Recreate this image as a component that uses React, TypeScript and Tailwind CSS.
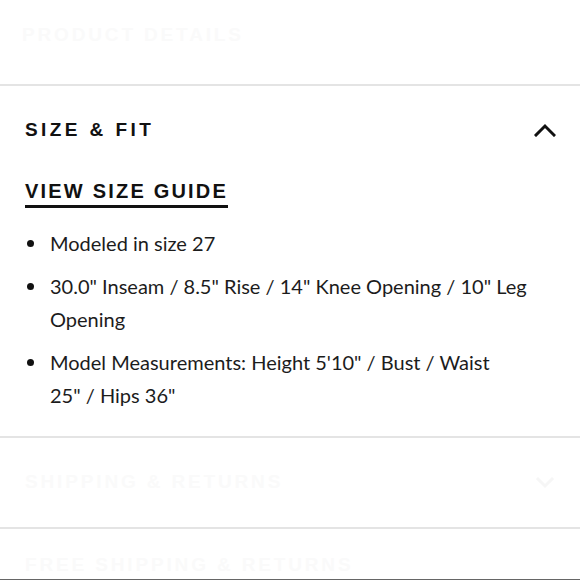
import React from 'react';

const body = { fontFamily: 'Lato, "Open Sans", sans-serif' };
const head = { fontFamily: '"Liberation Sans", Arial, sans-serif' };

function Chevron({ up, faint }: { up?: boolean; faint?: boolean }) {
  return (
    <svg width="22" height="14" viewBox="0 0 22 14" fill="none">
      <polyline
        points={up ? '2,12 11,3 20,12' : '4,3 11,10 18,3'}
        stroke={faint ? '#f6f6f6' : '#111'}
        strokeWidth="3"
        strokeLinecap="square"
      />
    </svg>
  );
}

function FaintRow({ title }: { title: string }) {
  return (
    <div className="flex h-[91px] items-center justify-between border-b-2 border-[#e4e4e4] pl-[25px] pr-[24px]">
      <span className="text-[19px] font-bold tracking-[0.15em] text-[#fafafa]" style={head}>
        {title}
      </span>
      <Chevron faint />
    </div>
  );
}

const items = [
  'Modeled in size 27',
  '30.0" Inseam / 8.5" Rise / 14" Knee Opening / 10" Leg Opening',
  'Model Measurements: Height 5\'10" / Bust / Waist 25"\u00a0/\u00a0Hips\u00a036"',
];

export default function App() {
  return (
    <div className="h-[580px] w-[580px] overflow-hidden bg-white">
      <div className="flex h-[86px] items-center border-b-2 border-[#e4e4e4] pb-[14px] pl-[22px]">
        <span className="text-[19px] font-bold tracking-[0.15em] text-[#fafafa]" style={head}>
          PRODUCT DETAILS
        </span>
      </div>

      <div className="border-b-2 border-[#e4e4e4] pb-[24px]">
        <div className="flex h-[88px] items-center justify-between pl-[25px] pr-[24px]">
          <span className="text-[19px] font-bold tracking-[0.18em] text-[#111]" style={head}>
            SIZE &amp; FIT
          </span>
          <Chevron up />
        </div>
        <div className="pl-[25px] pt-[5px]">
          <span
            className="inline-block border-b-[3px] border-[#111] pb-[2px] text-[20px] font-bold leading-6 tracking-[0.11em] text-[#111]"
            style={head}
          >
            VIEW SIZE GUIDE
          </span>
        </div>
        <ul className="mt-[19px] flex flex-col gap-[10px] pr-[20px] text-[20px] leading-[33px] text-[#1c1c1c]" style={body}>
          {items.map((t) => (
            <li key={t} className="flex">
              <span className="flex h-[33px] w-[50px] shrink-0 items-center pl-[27px]">
                <span className="h-[7px] w-[7px] rounded-full bg-[#111]" />
              </span>
              <span>{t}</span>
            </li>
          ))}
        </ul>
      </div>

      <FaintRow title="SHIPPING & RETURNS" />
      <div className="flex h-[52px] items-end justify-between border-b-2 border-[#666] pl-[25px] pr-[24px]">
        <span className="text-[19px] font-bold tracking-[0.15em] text-[#fafafa]" style={head}>
          FREE SHIPPING &amp; RETURNS
        </span>
      </div>
    </div>
  );
}
